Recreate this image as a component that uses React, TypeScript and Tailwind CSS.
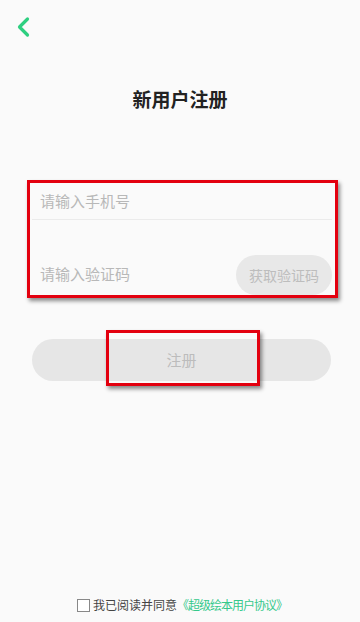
import React from "react";

const font = { fontFamily: '"Noto Sans CJK SC", "Noto Sans", sans-serif' };

const App = () => {
  return (
    <div
      className="relative flex h-[622px] w-[360px] flex-col bg-[#fafafa] text-[#333]"
      style={font}
    >
      {/* Back */}
      <div className="pl-[15px] pt-[16px]">
        <svg width="18" height="22" viewBox="0 0 18 22" fill="none">
          <path
            d="M12.5 3 L4.5 11 L12.5 19"
            stroke="#2ecf80"
            strokeWidth="3.2"
            strokeLinecap="round"
            strokeLinejoin="round"
          />
        </svg>
      </div>

      {/* Title */}
      <h1 className="mt-[48px] text-center text-[19px] font-bold leading-[26px] text-[#222]">
        新用户注册
      </h1>

      {/* Form */}
      <div className="relative ml-[32px] mr-[28px] mt-[72px]">
        <div className="flex h-[36px] items-center border-b border-[#ebebeb] pl-[8px]">
          <span className="text-[15px] text-[#b8b8b8]">请输入手机号</span>
        </div>
        <div className="flex h-[75px] items-end justify-between pl-[8px]">
          <span className="mb-[10px] text-[15px] text-[#b8b8b8]">请输入验证码</span>
          <button className="flex h-[40px] w-[96px] items-center justify-center rounded-full bg-[#e8e8e8] text-[14px] text-[#bdbdbd]">
            获取验证码
          </button>
        </div>
        {/* annotation */}
        <div className="pointer-events-none absolute -left-[5px] -right-[6px] -top-[4px] -bottom-[3px] border-[3px] border-[#e3000f] shadow-[2px_3px_4px_rgba(0,0,0,0.45)]" />
      </div>

      {/* Register */}
      <div className="relative ml-[32px] mr-[29px] mt-[44px]">
        <button className="flex h-[42px] w-full items-center justify-center rounded-full bg-[#e6e6e6] text-[15px] text-[#bcbcbc]">
          注册
        </button>
        <div className="pointer-events-none absolute left-[74px] top-[-9px] h-[56px] w-[154px] border-[3px] border-[#e3000f] shadow-[2px_3px_4px_rgba(0,0,0,0.45)]" />
      </div>

      {/* Agreement */}
      <div className="mt-auto mb-[9px] flex items-center justify-center whitespace-nowrap pl-[4px] text-[12px] leading-[16px]">
        <span className="mr-[3px] h-[13px] w-[13px] shrink-0 border border-[#888] bg-white" />
        <span className="text-[#444]">我已阅读并同意</span>
        <span className="shrink-0 tracking-[-1px] text-[#35c98b]">《超级绘本用户协议》</span>
      </div>
    </div>
  );
};

export default App;
